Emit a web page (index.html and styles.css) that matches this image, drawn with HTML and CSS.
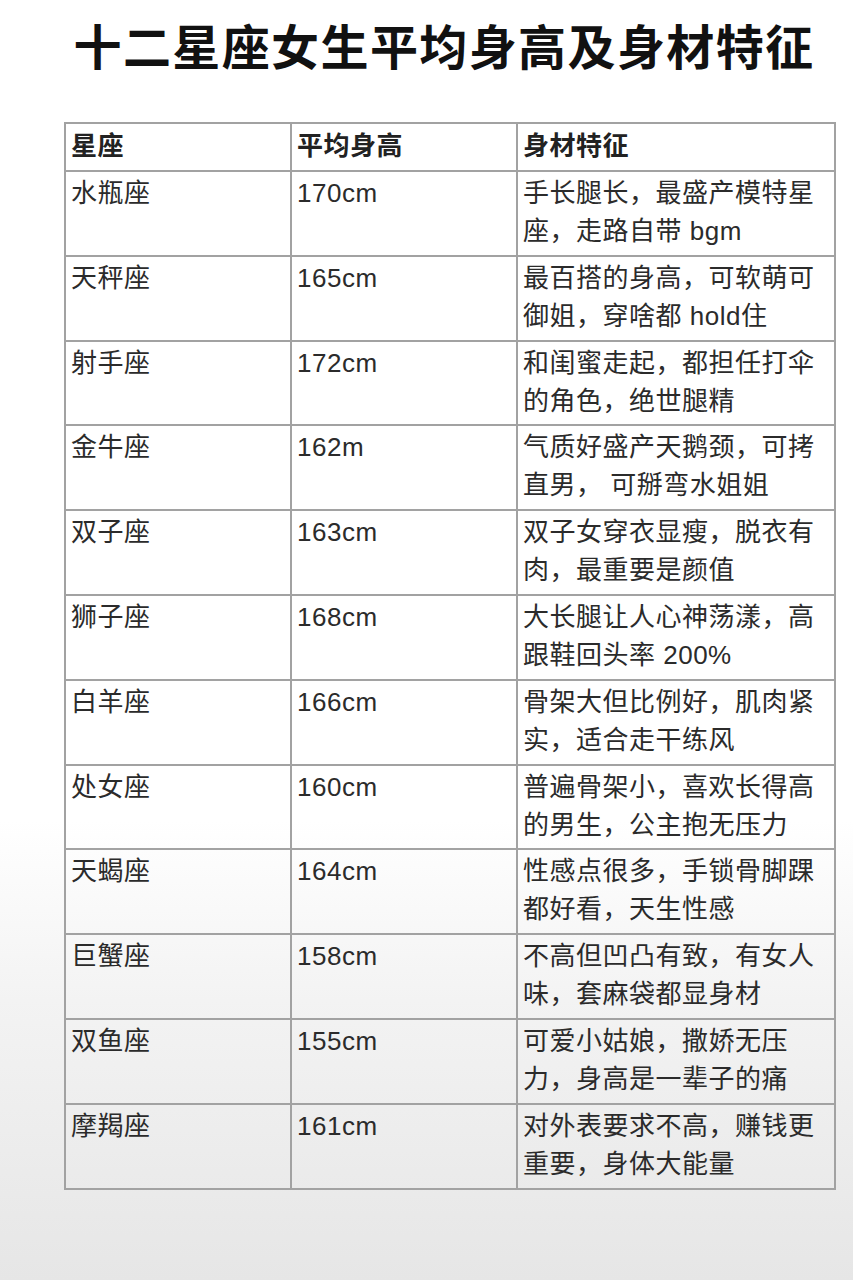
FILE: index.html
```html
<!DOCTYPE html>
<html lang="zh-CN">
<head>
<meta charset="utf-8">
<link rel="stylesheet" href="styles.css">
</head>
<body>
<div class="page">
  <h1 class="title">十二星座女生平均身高及身材特征</h1>
  <table class="grid">
    <colgroup>
      <col class="c1"><col class="c2"><col class="c3">
    </colgroup>
    <thead>
      <tr class="head"><th>星座</th><th>平均身高</th><th>身材特征</th></tr>
    </thead>
    <tbody>
      <tr><td>水瓶座</td><td>170cm</td><td>手长腿长，最盛产模特星<br>座，走路自带 bgm</td></tr>
      <tr><td>天秤座</td><td>165cm</td><td>最百搭的身高，可软萌可<br>御姐，穿啥都 hold住</td></tr>
      <tr><td>射手座</td><td>172cm</td><td>和闺蜜走起，都担任打伞<br>的角色，绝世腿精</td></tr>
      <tr><td>金牛座</td><td>162m</td><td>气质好盛产天鹅颈，可拷<br>直男， 可掰弯水姐姐</td></tr>
      <tr><td>双子座</td><td>163cm</td><td>双子女穿衣显瘦，脱衣有<br>肉，最重要是颜值</td></tr>
      <tr><td>狮子座</td><td>168cm</td><td>大长腿让人心神荡漾，高<br>跟鞋回头率 200%</td></tr>
      <tr><td>白羊座</td><td>166cm</td><td>骨架大但比例好，肌肉紧<br>实，适合走干练风</td></tr>
      <tr><td>处女座</td><td>160cm</td><td>普遍骨架小，喜欢长得高<br>的男生，公主抱无压力</td></tr>
      <tr><td>天蝎座</td><td>164cm</td><td>性感点很多，手锁骨脚踝<br>都好看，天生性感</td></tr>
      <tr><td>巨蟹座</td><td>158cm</td><td>不高但凹凸有致，有女人<br>味，套麻袋都显身材</td></tr>
      <tr><td>双鱼座</td><td>155cm</td><td>可爱小姑娘，撒娇无压<br>力，身高是一辈子的痛</td></tr>
      <tr><td>摩羯座</td><td>161cm</td><td>对外表要求不高，赚钱更<br>重要，身体大能量</td></tr>
    </tbody>
  </table>
</div>
</body>
</html>
```
FILE: styles.css
```css
html, body {
  margin: 0;
  padding: 0;
}
body {
  width: 853px;
  height: 1280px;
  overflow: hidden;
  background: linear-gradient(to bottom, #ffffff 0px, #ffffff 820px, #f3f3f3 1000px, #e6e6e6 1280px);
  font-family: "Liberation Sans", "Noto Sans CJK SC", sans-serif;
  color: #2b2b2b;
}
.page {
  margin-left: 64px;
  width: 770px;
  padding-top: 14px;
}
.title {
  margin: 0 0 48px 0;
  padding-right: 10px;
  font-family: "Noto Sans CJK SC", sans-serif;
  font-size: 48px;
  line-height: 60px;
  font-weight: 700;
  letter-spacing: 1.4px;
  color: #111;
  text-align: center;
  white-space: nowrap;
}
.grid {
  border-collapse: collapse;
  table-layout: fixed;
  width: 770px;
  border: 2px solid #8e8e8e;
}
.c1 { width: 226px; }
.c2 { width: 226px; }
.c3 { width: 318px; }
.grid th, .grid td {
  border: 2px solid #a2a2a2;
  text-align: left;
  vertical-align: top;
  padding: 2px 6px 0 5px;
  font-size: 26px;
  line-height: 38px;
  letter-spacing: 0.5px;
  white-space: nowrap;
}
.grid th {
  font-weight: 600;
  padding-top: 3px;
  color: #222;
}
.head { height: 48px; }
.grid tbody tr { height: 84.8px; }
```
